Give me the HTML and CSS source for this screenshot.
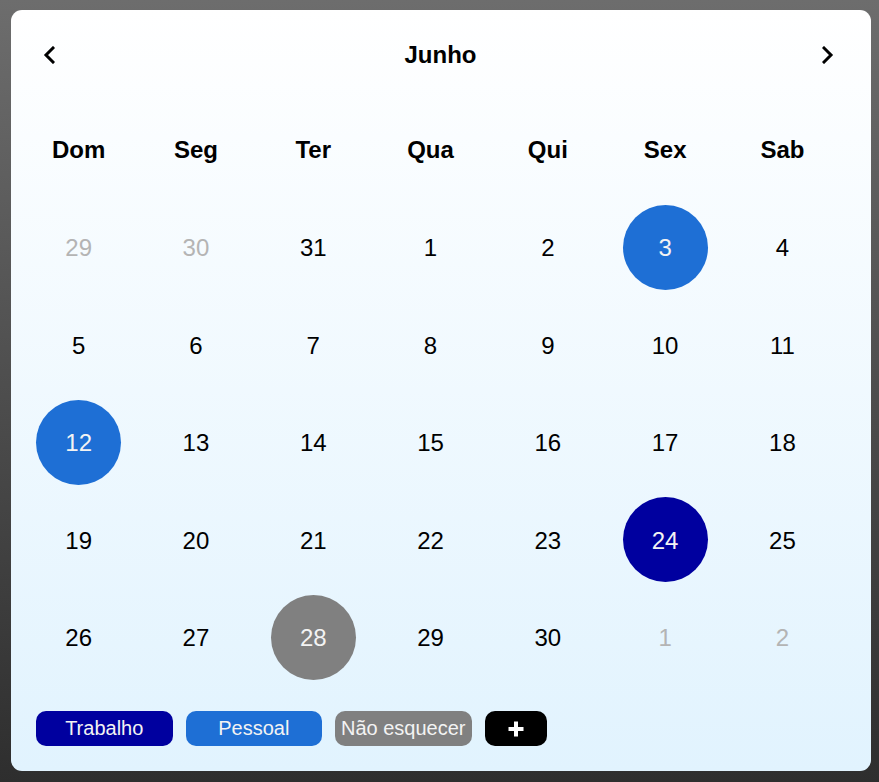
FILE: index.html
```html
<!DOCTYPE html>
<html lang="pt">
<head>
<meta charset="utf-8">
<title>Calendário - Junho</title>
<link rel="stylesheet" href="styles.css">
</head>
<body>
<div class="card">
  <div class="header">
    <button class="nav" aria-label="Mês anterior">
      <svg width="12" height="18" viewBox="0 0 12 18"><path d="M10 2 L3 9 L10 16" fill="none" stroke="#000" stroke-width="3" stroke-linecap="square"/></svg>
    </button>
    <h1 class="title">Junho</h1>
    <button class="nav" aria-label="Próximo mês">
      <svg width="12" height="18" viewBox="0 0 12 18"><path d="M2 2 L9 9 L2 16" fill="none" stroke="#000" stroke-width="3" stroke-linecap="square"/></svg>
    </button>
  </div>
  <div class="grid">
    <div class="wd">Dom</div><div class="wd">Seg</div><div class="wd">Ter</div><div class="wd">Qua</div><div class="wd">Qui</div><div class="wd">Sex</div><div class="wd">Sab</div>

    <div class="cell"><span class="day muted">29</span></div>
    <div class="cell"><span class="day muted">30</span></div>
    <div class="cell"><span class="day">31</span></div>
    <div class="cell"><span class="day">1</span></div>
    <div class="cell"><span class="day">2</span></div>
    <div class="cell"><span class="day ev-pessoal">3</span></div>
    <div class="cell"><span class="day">4</span></div>

    <div class="cell"><span class="day">5</span></div>
    <div class="cell"><span class="day">6</span></div>
    <div class="cell"><span class="day">7</span></div>
    <div class="cell"><span class="day">8</span></div>
    <div class="cell"><span class="day">9</span></div>
    <div class="cell"><span class="day">10</span></div>
    <div class="cell"><span class="day">11</span></div>

    <div class="cell"><span class="day ev-pessoal">12</span></div>
    <div class="cell"><span class="day">13</span></div>
    <div class="cell"><span class="day">14</span></div>
    <div class="cell"><span class="day">15</span></div>
    <div class="cell"><span class="day">16</span></div>
    <div class="cell"><span class="day">17</span></div>
    <div class="cell"><span class="day">18</span></div>

    <div class="cell"><span class="day">19</span></div>
    <div class="cell"><span class="day">20</span></div>
    <div class="cell"><span class="day">21</span></div>
    <div class="cell"><span class="day">22</span></div>
    <div class="cell"><span class="day">23</span></div>
    <div class="cell"><span class="day ev-trabalho">24</span></div>
    <div class="cell"><span class="day">25</span></div>

    <div class="cell"><span class="day">26</span></div>
    <div class="cell"><span class="day">27</span></div>
    <div class="cell"><span class="day ev-lembrete">28</span></div>
    <div class="cell"><span class="day">29</span></div>
    <div class="cell"><span class="day">30</span></div>
    <div class="cell"><span class="day muted">1</span></div>
    <div class="cell"><span class="day muted">2</span></div>
  </div>
  <div class="legend">
    <button class="tag ev-trabalho">Trabalho</button>
    <button class="tag ev-pessoal">Pessoal</button>
    <button class="tag ev-lembrete">Não esquecer</button>
    <button class="tag add" aria-label="Adicionar">
      <svg width="18" height="18" viewBox="0 0 18 18"><path d="M9 1.5 V16.5 M1.5 9 H16.5" stroke="#fff" stroke-width="4"/></svg>
    </button>
  </div>
</div>
</body>
</html>
```
FILE: styles.css
```css
html, body {
  margin: 0;
  height: 100%;
}

body {
  background: linear-gradient(to bottom, #6d6d6d 0%, #2e2e2e 100%);
  font-family: "Liberation Sans", Arial, sans-serif;
  padding: 10px 8px 0 11px;
  box-sizing: border-box;
}

.card {
  width: 860px;
  border-radius: 11px;
  background: linear-gradient(to bottom, #ffffff 0%, #e1f3fe 100%);
  box-sizing: border-box;
  padding: 0 0 25px 0;
}

.header {
  height: 88px;
  display: flex;
  align-items: center;
  justify-content: space-between;
  padding: 2px 37px 0 32px;
  box-sizing: border-box;
  margin-bottom: 3px;
}

.nav {
  background: none;
  border: 0;
  padding: 0;
  margin: 0;
  width: 12px;
  height: 18px;
  display: flex;
  cursor: pointer;
}

.title {
  margin: 0;
  font-size: 24px;
  font-weight: bold;
  color: #000;
  line-height: 1;
  position: relative;
  left: 2px;
}

.grid {
  display: grid;
  grid-template-columns: repeat(7, 117.3px);
  grid-auto-rows: 97.5px;
  margin-left: 9px;
}

.wd {
  display: flex;
  align-items: center;
  justify-content: center;
  font-size: 24px;
  font-weight: bold;
  color: #000;
  padding-top: 1px;
}

.cell {
  display: flex;
  align-items: center;
  justify-content: center;
}

.day {
  width: 85px;
  height: 85px;
  box-sizing: border-box;
  padding-top: 2px;
  border-radius: 50%;
  display: flex;
  align-items: center;
  justify-content: center;
  font-size: 24px;
  color: #000;
}

.day.muted {
  color: #b4b4b4;
}

.ev-pessoal {
  background: #1e6fd5;
}

.ev-trabalho {
  background: #00009f;
}

.ev-lembrete {
  background: #808080;
}

.day.ev-pessoal,
.day.ev-trabalho,
.day.ev-lembrete {
  color: #f3f3f3;
}

.legend {
  display: flex;
  gap: 13px;
  margin: 25px 0 0 25px;
}

.tag {
  width: 136.5px;
  height: 35px;
  border: 0;
  border-radius: 10px;
  padding: 0;
  font-family: "Liberation Sans", Arial, sans-serif;
  font-size: 20px;
  color: #f3f3f3;
  display: flex;
  align-items: center;
  justify-content: center;
  cursor: pointer;
}

.tag.add {
  width: 62px;
  background: #000;
}
```
